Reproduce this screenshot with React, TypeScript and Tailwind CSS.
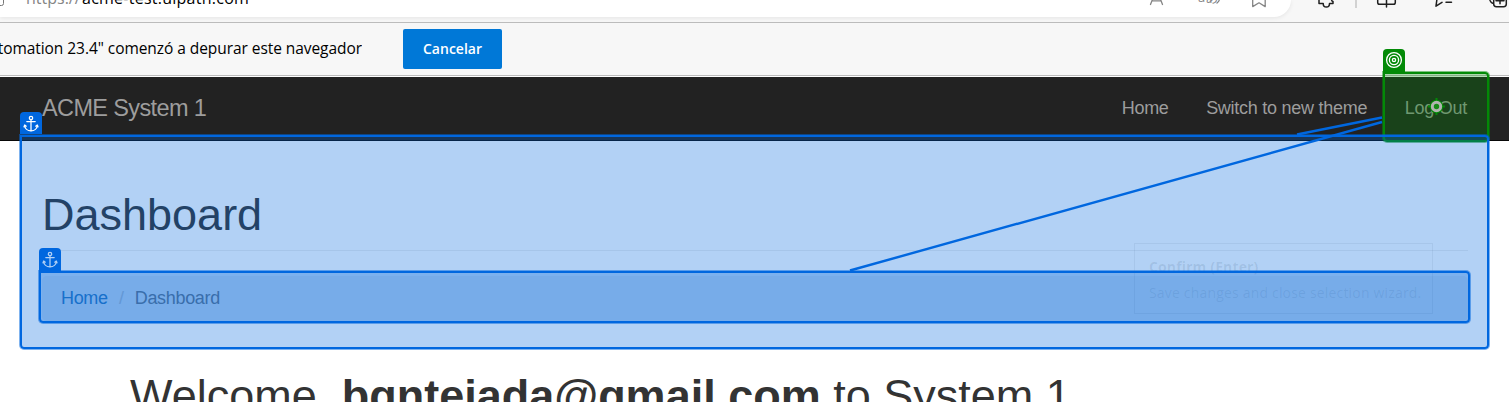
import React from "react";

function AnchorIcon() {
  return (
    <svg width="16" height="18" viewBox="0 0 16 18" fill="none" stroke="currentColor" strokeWidth="1.25" strokeLinecap="round" strokeLinejoin="round">
      <circle cx="8" cy="3" r="1.7" />
      <path d="M8 4.8V16M3.8 6.6H12.2M1.6 10.2C1.8 13.6 4.6 15.8 8 15.8C11.4 15.8 14.2 13.6 14.4 10.2M1 11.8L1.7 10L3.3 11.2M12.7 11.2L14.3 10L15 11.8" />
    </svg>
  );
}

function TargetIcon() {
  return (
    <svg width="18" height="18" viewBox="0 0 18 18" fill="none" stroke="#fff">
      <circle cx="9" cy="9" r="7.4" strokeWidth="1.3" />
      <circle cx="9" cy="9" r="4.6" strokeWidth="1.3" />
      <circle cx="9" cy="9" r="1.6" strokeWidth="1.4" />
    </svg>
  );
}

function ToolbarIcons() {
  return (
    <svg width="409" height="18" viewBox="1100 0 409 18" className="block" fill="none" strokeLinejoin="round" strokeLinecap="round">
      <g stroke="#858585" strokeWidth="1.3">
        <path d="M1150.500 4.500L1156.500 -11L1162.500 4.500M1152.500 .8H1160.500" />
        <path d="M1252.700 -6V6.600L1259 2.800L1265.200 6.600V-6" />
        <path d="M1217.500 -4Q1221.500 -.5 1217 3" />
      </g>
      <g stroke="#202020" strokeWidth="1.5">
        <path d="M1321 3.500H1319V-4M1321 3.500H1323.200C1323.200 8.300 1329.500 8.300 1329.500 3.500H1333V1.500C1331 1 1331 -2 1333 -3" />
        <path d="M1386.500 -4V7M1377.700 -3V2.500Q1377.700 4.300 1379.500 4.300H1386.500M1386.500 4.300H1393.500Q1395.300 4.300 1395.300 2.500V-3" />
        <path d="M1437.500 -5L1436 6.200L1442 2.400M1446 2.300H1451.500" />
        <path d="M1490 .5Q1491 2.500 1492.500 3.200M1493.700 -4V4Q1493.700 6.700 1496.400 6.700H1503.600Q1506.300 6.700 1506.300 4V-4M1500 -3V3.700M1496 .7H1504" />
      </g>
      <path d="M1356 0V8" stroke="#c8c8c8" strokeWidth="1.6" strokeLinecap="butt" />
    </svg>
  );
}

function AddressBar() {
  return (
    <div className="relative h-[23px] overflow-hidden border-b border-[#bcbcbc] bg-[#f7f7f7]">
      <div className="h-[17px] w-[1291px] rounded-br-[18px] bg-white shadow-[0_1px_4px_rgba(0,0,0,0.08)]" />
      <svg className="absolute left-0 top-0" width="6" height="8" viewBox="0 0 6 8" fill="none" stroke="#777">
        <path d="M0 5.500H1.500Q3.500 5.500 3.500 3.500V0" />
      </svg>
      <div className="absolute left-[26px] top-[-13px] flex whitespace-nowrap font-['Open_Sans',sans-serif] text-[16px] leading-[22px] text-black">
        <span className="w-[56px] text-[#858585]">https://</span>
        <span className="tracking-[0.25px]">acme-test.uipath.com</span>
      </div>
      <div className="absolute left-[1198px] top-[-14px] font-['Open_Sans','Noto_Sans_CJK_JP',sans-serif] text-[13px] leading-[22px] text-[#858585]">aあ</div>
      <div className="absolute left-[1100px] top-0">
        <ToolbarIcons />
      </div>
    </div>
  );
}

function DebugBar() {
  return (
    <div className="flex h-[53px] items-center border-b border-[#bcbcbc] bg-[#f7f7f7] font-['Open_Sans',sans-serif]">
      <div className="mb-[2px] flex w-[362px] justify-end overflow-hidden whitespace-nowrap text-[15.500px] leading-6 tracking-[-0.060px] text-black">
        <span>tomation 23.4" comenzó a depurar este navegador</span>
      </div>
      <button className="mb-px ml-[41px] h-10 w-[99px] rounded-[2px] bg-[#0078d7] text-[14px] font-semibold text-white">Cancelar</button>
    </div>
  );
}

function NavBar() {
  return (
    <nav className="mt-px flex h-16 items-center justify-between border-b border-[#080808] bg-[#222] pb-[2px] pl-[42px] pr-[42px] text-[#9d9d9d]">
      <span className="text-[23.500px] leading-7 tracking-[-0.630px]">ACME System 1</span>
      <div className="flex gap-[37.500px] text-[18px] leading-6 tracking-[-0.260px]">
        <span>Home</span>
        <span>Switch to new theme</span>
        <span>Log Out</span>
      </div>
    </nav>
  );
}

function Overlays() {
  return (
    <>
      <div className="absolute left-[1134px] top-[243px] h-[71px] w-[299px] whitespace-nowrap border border-black/6 pl-[14px] pt-[10px] font-['Open_Sans',sans-serif] text-[14px] leading-[26px] text-black/10">
        <div className="font-bold tracking-[0.130px]">Confirm (Enter)</div>
        <div className="tracking-[0.180px]">Save changes and close selection wizard.</div>
      </div>

      <div className="absolute left-[1383px] top-[72px] h-[70px] w-[106px] rounded-[4px] rounded-tl-none border-2 border-[#038a07] bg-[#068f0a]/30 shadow-[0_0_0_1px_rgba(6,143,10,0.5)]" />
      <div className="absolute left-[1383px] top-[49px] flex h-[23px] w-[22px] items-start justify-center rounded-t-[4px] bg-[#038a07] pt-[2px]">
        <TargetIcon />
      </div>
      <svg className="absolute left-[1426px] top-[96px]" width="20" height="20" viewBox="0 0 20 20">
        <path d="M10.500 2V19M2 10.500H19" stroke="#038a07" strokeWidth="2" />
        <circle cx="10.500" cy="10.500" r="6.800" fill="#038a07" />
        <circle cx="10.500" cy="10.500" r="4.200" fill="#168a18" stroke="#b0b4b0" strokeWidth="3" />
      </svg>

      <div className="absolute left-[20px] top-[135px] h-[214px] w-[1469px] rounded-[4px] rounded-tl-none border-2 border-[#0067df] bg-[#0067df]/30 shadow-[0_0_0_1px_rgba(0,103,223,0.5)]" />
      <div className="absolute left-[20px] top-[112px] flex h-[22px] w-[22px] items-center justify-center rounded-t-[4px] bg-[#0067df] pt-px text-white">
        <AnchorIcon />
      </div>
      <div className="absolute left-[39px] top-[271px] h-[52px] w-[1431px] rounded-[4px] rounded-tl-none border-2 border-[#0067df] bg-[#0067df]/30 shadow-[0_0_0_1px_rgba(0,103,223,0.5)]" />
      <div className="absolute left-[39px] top-[248px] flex h-[23px] w-[22px] items-center justify-center rounded-t-[4px] bg-[#0067df] text-[#b2d1f5]">
        <AnchorIcon />
      </div>
      <svg className="absolute left-0 top-0" width="1509" height="402" viewBox="0 0 1509 402" stroke="#0067df" strokeWidth="2.4">
        <path d="M1297 134.500L1382 117.500M850 270.500L1382 122" />
      </svg>
    </>
  );
}

export default function App() {
  return (
    <div className="relative h-[402px] w-[1509px] overflow-hidden bg-white font-['Liberation_Sans',Arial,sans-serif] text-[#333]">
      <AddressBar />
      <DebugBar />
      <NavBar />
      <main>
        <header className="mx-[42px] mt-[49px] h-[61px] w-[1426px] border-b border-[#eee]">
          <h1 className="text-[45px] leading-[50px]">Dashboard</h1>
        </header>
        <div className="mx-[42px] mt-[25px] flex h-[45px] w-[1426px] items-center rounded-[5px] bg-[#f5f5f5] pl-[19px] text-[18px] tracking-[-0.320px]">
          <a className="text-[#337ab7]">Home</a>
          <span className="w-[27px] text-center text-[#ccc]">/</span>
          <span className="text-[#777]">Dashboard</span>
        </div>
        <h1 className="ml-[130px] mt-[50px] whitespace-pre text-[45px] leading-[50px]">
          Welcome, <b>bgntejada@gmail.com</b> to System 1
        </h1>
      </main>
      <Overlays />
    </div>
  );
}
